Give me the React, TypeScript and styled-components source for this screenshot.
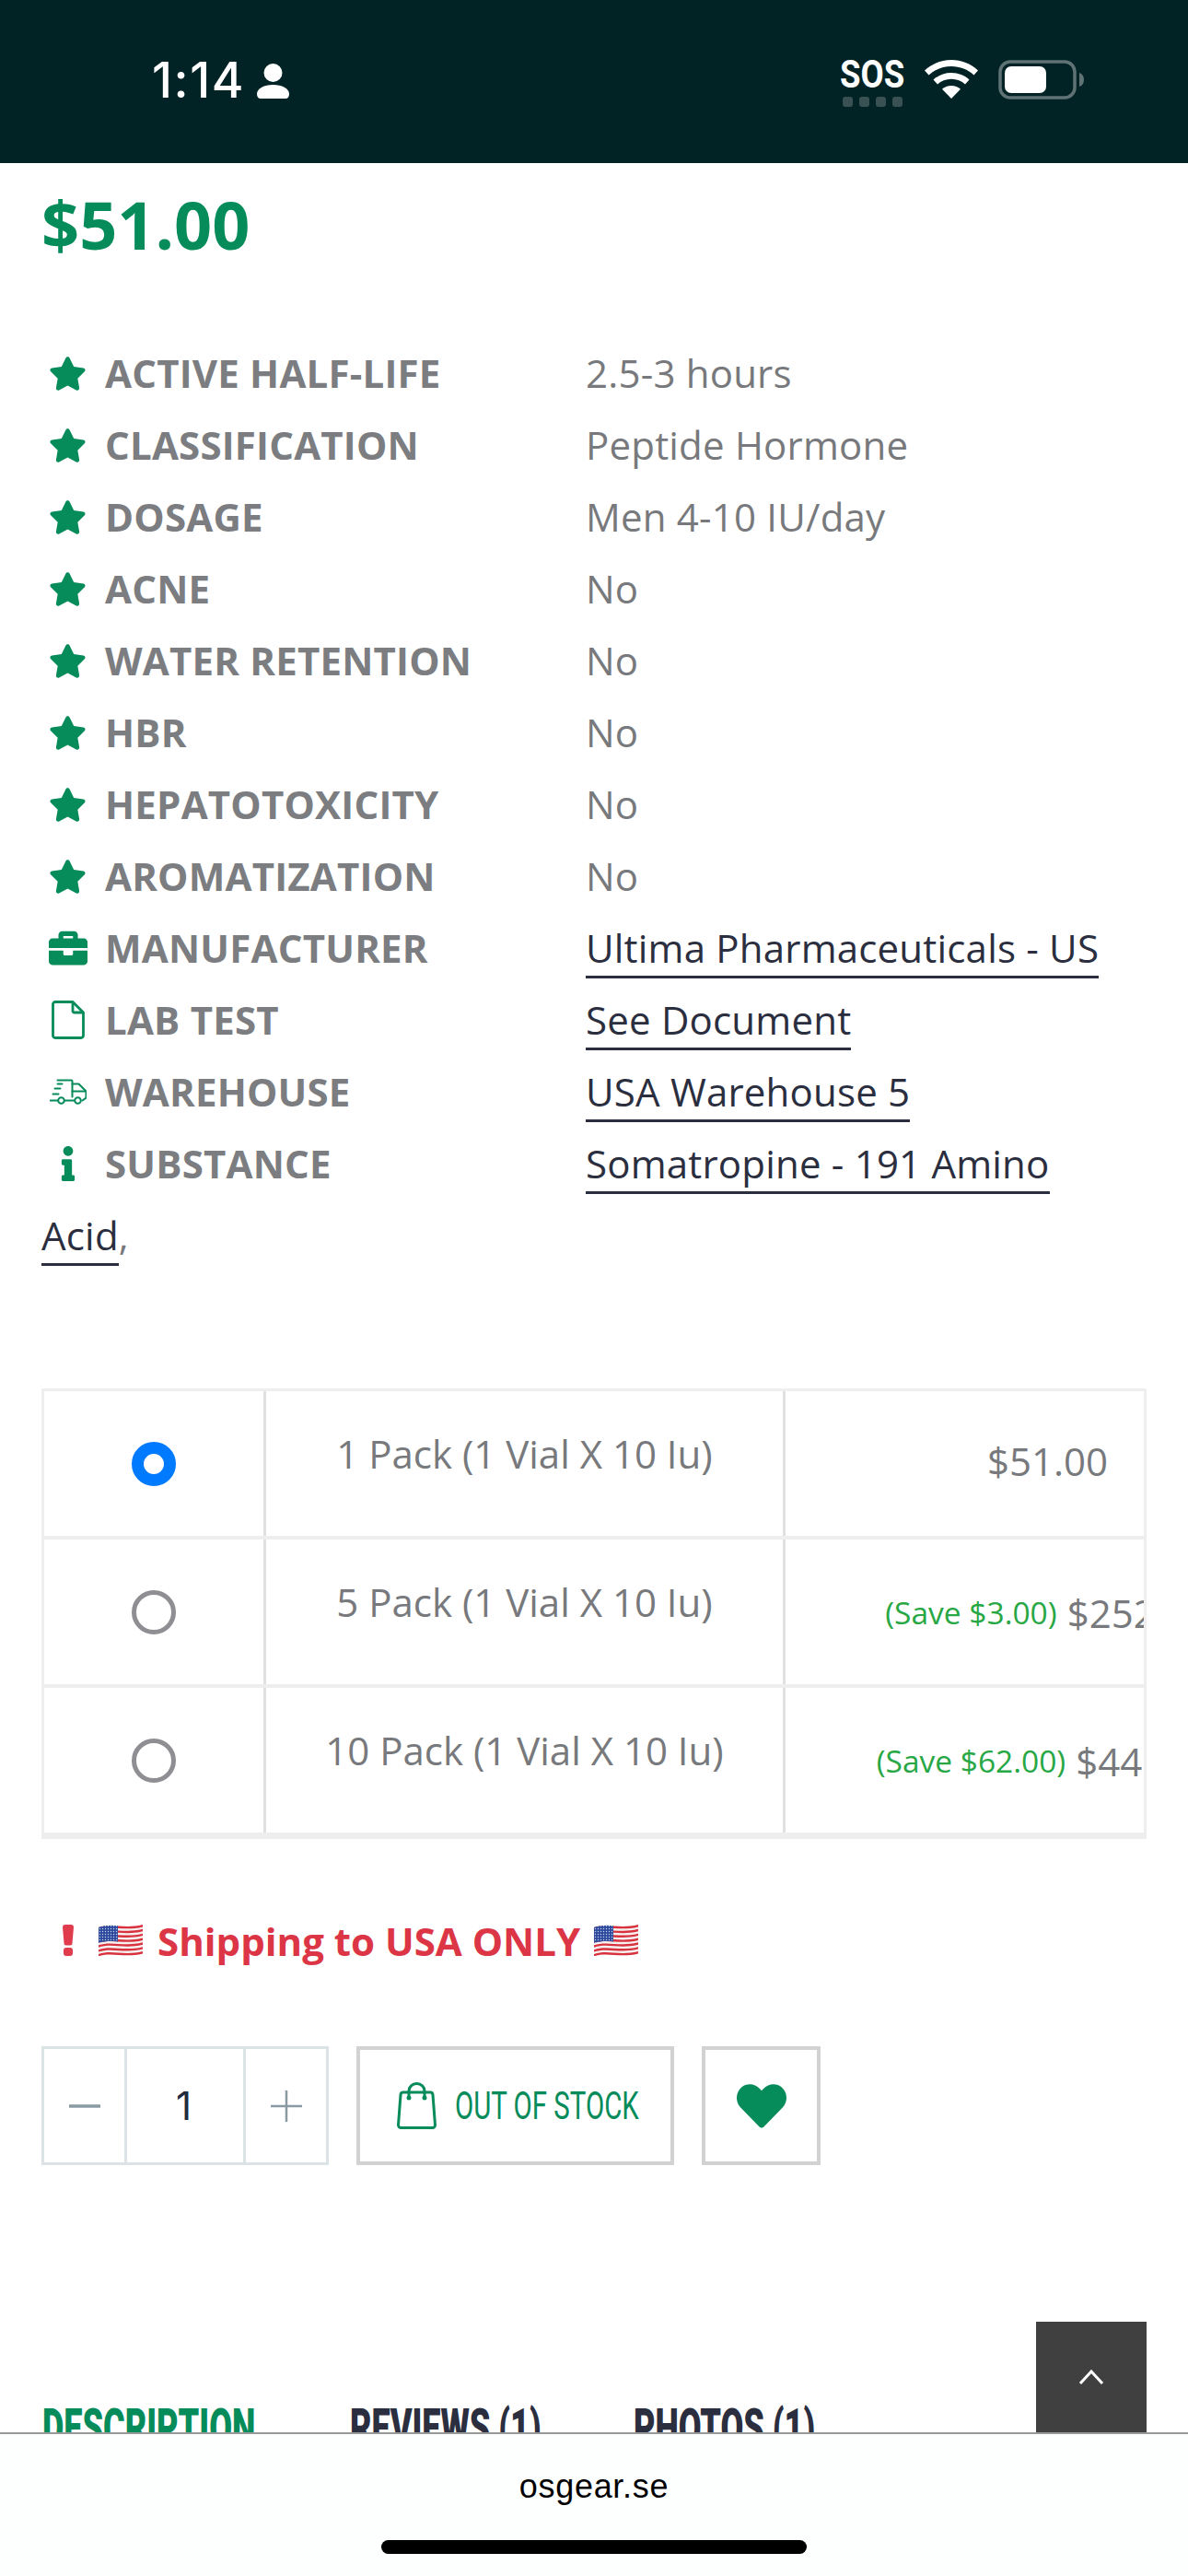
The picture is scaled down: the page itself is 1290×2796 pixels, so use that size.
import React from "react";
import styled, { createGlobalStyle } from "styled-components";
import { FaStar, FaBriefcase, FaInfo, FaHeart } from "react-icons/fa";

const Global = createGlobalStyle`
  html, body { margin: 0; padding: 0; background: #fff; }
  * { box-sizing: border-box; }
`;

const Page = styled.div`
  position: relative;
  width: 1290px;
  height: 2796px;
  overflow: hidden;
  background: #fff;
  font-family: "Open Sans", sans-serif;
`;

const StatusBar = styled.header`
  height: 177px;
  background: #012326;
  display: flex;
  justify-content: space-between;
  align-items: flex-start;
  padding: 65px 113px 0 165px;
  color: #fff;
`;
const StatusLeft = styled.div`
  display: flex;
  align-items: flex-start;
  gap: 13px;
`;
const Time = styled.span`
  font-family: Inter, sans-serif;
  font-weight: 500;
  font-size: 53px;
  line-height: 44px;
  letter-spacing: 1.6px;
`;
const PersonSlot = styled.span`
  display: block;
  margin-top: 4px;
`;
const StatusRight = styled.div`
  display: flex;
  align-items: flex-start;
  gap: 22px;
`;
const SosBlock = styled.div`
  display: flex;
  flex-direction: column;
  align-items: center;
  gap: 9px;
  width: 70px;
`;
const Sos = styled.span`
  display: block;
  width: 70px;
  font-family: Roboto, sans-serif;
  font-weight: 700;
  font-size: 42px;
  line-height: 31px;
  white-space: nowrap;
  transform: scaleX(0.87);
  transform-origin: left center;
`;
const SosDots = styled.div`
  display: flex;
  gap: 7px;
`;
const SosDot = styled.i`
  display: block;
  width: 11px;
  height: 11px;
  border-radius: 3px;
  background: #3a5154;
`;

const Main = styled.main`
  padding: 0 45px;
`;
const Price = styled.div`
  font-weight: 700;
  font-size: 72px;
  line-height: 90px;
  color: #068b5a;
  padding-top: 21px;
`;
const Specs = styled.ul`
  list-style: none;
  margin: 78px 20px 127px 0;
  padding: 0;
  font-size: 42px;
  line-height: 78px;
  letter-spacing: 0.2px;
`;
const SpecRow = styled.li`
  color: #77797c;
`;
const SpecLabel = styled.span`
  display: inline-block;
  width: 591px;
  font-weight: 700;
  color: #7b7d80;
  vertical-align: top;
`;
const SpecIcon = styled.span`
  display: inline-flex;
  justify-content: center;
  align-items: center;
  width: 57px;
  height: 78px;
  margin-right: 12px;
  vertical-align: top;
  color: #068b5a;
`;
const SpecLink = styled.a`
  color: #2a2e3e;
  text-decoration: none;
  border-bottom: 3px solid #2a2e3e;
  padding-bottom: 2px;
`;

const TableWrap = styled.div`
  width: 1200px;
  overflow: hidden;
  border: 3px solid #eee;
`;
const VariantRow = styled.div`
  display: grid;
  grid-template-columns: 241px 564px 572px;
  width: 1377px;
  height: 161px;
  border-bottom: 4px solid #eee;
`;
const Cell = styled.div`
  display: flex;
  align-items: center;
  justify-content: center;
  border-right: 3px solid #e0e0e0;
  color: #77797c;
  font-size: 42px;
  white-space: nowrap;
`;
const NameCell = styled(Cell)`
  align-items: flex-start;
  padding-top: 39px;
  line-height: 57px;
`;
const PriceCell = styled(Cell)<{ $solo: boolean }>`
  gap: 11px;
  padding-top: ${(p) => (p.$solo ? "0" : "1px")};
  padding-bottom: ${(p) => (p.$solo ? "7px" : "0")};
`;
const Save = styled.span`
  color: #28a745;
  font-size: 33.500px;
`;
const Radio = styled.input`
  appearance: none;
  width: 48px;
  height: 48px;
  margin: 0;
  border-radius: 50%;
  border: 5px solid #8e8e93;
  background: #fff;
  &:checked {
    border: 13px solid #007aff;
  }
`;

const Notice = styled.div`
  display: flex;
  align-items: center;
  height: 60px;
  margin: 80px 0 0 23px;
  color: #dc3545;
  font-weight: 700;
  font-size: 42px;
  white-space: nowrap;
`;
const NoticeText = styled.span`
  margin: 0 15px 0 16px;
`;
const BangSlot = styled.span`
  display: block;
  width: 39px;
`;

const Actions = styled.div`
  display: flex;
  gap: 30px;
  margin-top: 85px;
`;
const Qty = styled.div`
  display: grid;
  grid-template-columns: 90px 129px 1fr;
  width: 312px;
  height: 129px;
  border: 3px solid #dce3e6;
`;
const QtyCell = styled.div<{ $divider?: boolean }>`
  display: flex;
  align-items: center;
  justify-content: center;
  border-right: ${(p) => (p.$divider ? "3px solid #dce3e6" : "0")};
  color: #222a3e;
  font-family: Inter, sans-serif;
  font-size: 42px;
`;
const QtyValue = styled.span`
  padding-right: 3px;
`;
const ActionButton = styled.button`
  display: flex;
  align-items: center;
  justify-content: center;
  height: 129px;
  background: #fff;
  border: 4px solid #d2d2d2;
  color: #068b5a;
  padding: 0;
`;
const StockButton = styled(ActionButton)`
  width: 345px;
  justify-content: flex-start;
  gap: 20px;
  padding-left: 40px;
`;
const WishButton = styled(ActionButton)`
  width: 129px;
`;
const StockLabel = styled.span`
  display: block;
  width: 197px;
  font-family: Roboto, sans-serif;
  font-weight: 400;
  font-size: 42px;
  line-height: 1;
  text-align: left;
  white-space: nowrap;
  transform: scaleX(0.7);
  transform-origin: left center;
`;

const Tabs = styled.nav`
  display: flex;
  gap: 105px;
  margin: 257px 0 0 1px;
`;
const Tab = styled.span<{ $active?: boolean; $width: number }>`
  display: block;
  width: ${(p) => p.$width}px;
  font-family: Roboto, sans-serif;
  font-weight: 900;
  font-size: 55px;
  line-height: 56px;
  white-space: nowrap;
  color: ${(p) => (p.$active ? "#068b5a" : "#2a2e3e")};
  transform: scaleX(0.655);
  transform-origin: left center;
`;

const ToTop = styled.div`
  position: absolute;
  left: 1125px;
  top: 2520px;
  width: 120px;
  height: 120px;
  background: #404040;
  display: flex;
  align-items: center;
  justify-content: center;
`;
const BrowserBar = styled.footer`
  position: absolute;
  left: 0;
  right: 0;
  top: 2640px;
  height: 156px;
  background: #fdfefe;
  border-top: 2px solid #999;
  display: flex;
  flex-direction: column;
  align-items: center;
`;
const Domain = styled.div`
  margin-top: 36px;
  font-family: "Liberation Sans", sans-serif;
  font-size: 36px;
  line-height: 42px;
  letter-spacing: 0.7px;
  color: #000;
`;
const HomeBar = styled.div`
  margin-top: 37px;
  width: 462px;
  height: 15px;
  border-radius: 8px;
  background: #000;
`;

const Person = () => (
  <svg width="35" height="38" viewBox="0 0 35 38" fill="#fff" display="block">
    <circle cx="17.500" cy="10" r="10" />
    <path d="M0 33C0 27 8 23 17.500 23S35 27 35 33c0 3-1.500 5-4 5H4c-2.500 0-4-2-4-5z" />
  </svg>
);
const Wifi = () => (
  <svg width="58" height="42" viewBox="0 0 58 42" fill="#fff" display="block">
    <path d="M29 0c11 0 21 4 29 11.500l-4.500 5C47 10.500 38.500 7 29 7S11 10.500 4.500 16.500L0 11.500C8 4 18 0 29 0z" />
    <path d="M29 14c7.500 0 14.500 2.800 19.500 7.500L44 26.500C40 23 35 20.800 29 20.800S18 23 14 26.500l-4.500-5C14.500 16.800 21.500 14 29 14z" />
    <path d="M29 28c4 0 7.500 1.500 10 3.800L29 42 19 31.800C21.500 29.500 25 28 29 28z" />
  </svg>
);
const Battery = () => (
  <svg width="93" height="43" viewBox="0 0 93 43" display="block">
    <rect x="2" y="2" width="81" height="39" rx="11" fill="none" stroke="#5f7375" strokeWidth="3.500" />
    <rect x="7" y="7" width="45" height="29" rx="7" fill="#fff" />
    <path d="M88 14c3 1 5 3.500 5 7.500s-2 6.500-5 7.500z" fill="#5f7375" />
  </svg>
);
const FileIcon = () => (
  <svg width="36" height="42" viewBox="0 0 36 42" fill="none" stroke="#068b5a" strokeWidth="2.800" strokeLinejoin="round">
    <path d="M4 1.500H23L34.500 13V38a2.500 2.500 0 0 1-2.500 2.500H4A2.500 2.500 0 0 1 1.500 38V4A2.500 2.500 0 0 1 4 1.500z" />
    <path d="M23 1.500V11a2 2 0 0 0 2 2h9.500" />
  </svg>
);
const Truck = () => (
  <svg width="40" height="28" viewBox="-0.500 -0.500 40 28" fill="none" stroke="#068b5a" strokeWidth="2" strokeLinecap="round" strokeLinejoin="round">
    <path d="M8 1h15a1 1 0 0 1 1 1v17" />
    <path d="M24 5h7l8 8v7l-4 3" />
    <path d="M24 13h14" />
    <circle cx="12" cy="23" r="3.300" />
    <circle cx="30" cy="23" r="3.300" />
    <path d="M0 23h8M3 16h6M5 10h6M8 5h5M16 23h10" />
  </svg>
);
const Bag = () => (
  <svg width="43" height="51" viewBox="0 0 43 51" fill="none" stroke="#068b5a" strokeWidth="3" strokeLinecap="round" strokeLinejoin="round" style={{ flex: "none" }}>
    <path d="M7 11h29a3 3 0 0 1 3 2.800l2.500 32.700a3 3 0 0 1-3 3H4.500a3 3 0 0 1-3-3L4 13.800A3 3 0 0 1 7 11z" />
    <path d="M13 17V9.500a8.500 8 0 0 1 17 0V17" />
    <circle cx="13" cy="17" r="1" fill="#068b5a" />
    <circle cx="30" cy="17" r="1" fill="#068b5a" />
  </svg>
);
const Minus = () => (
  <svg width="34" height="34" viewBox="0 0 34 34"><path d="M0 17h34" stroke="#8a9aa3" strokeWidth="3.500" /></svg>
);
const Plus = () => (
  <svg width="34" height="34" viewBox="0 0 34 34"><path d="M0 17h34M17 0v34" stroke="#8a9aa3" strokeWidth="2.500" /></svg>
);
const Chevron = () => (
  <svg width="28" height="16" viewBox="0 0 28 16" fill="none"><path d="M2 15L14 2l12 13" stroke="#fff" strokeWidth="3" /></svg>
);
const Bang = () => (
  <svg width="12" height="34" viewBox="0 0 12 34" fill="#e03c4e" display="block">
    <path d="M0 3a3 3 0 0 1 3-3h6a3 3 0 0 1 3 3l-1.500 17a2.500 2.500 0 0 1-2.500 2.500H4A2.500 2.500 0 0 1 1.500 20z" />
    <rect x="1" y="25" width="10" height="9" rx="3" />
  </svg>
);
const Flag = () => {
  const stripe = (y: number, h: number) =>
    `M0 ${y + 3}C14 ${y - 2} 28 ${y + 5} 48 ${y}V${y + h}C28 ${y + h + 5} 14 ${y + h - 2} 0 ${y + h + 3}z`;
  return (
    <svg width="48" height="34" viewBox="0 0 48 34" style={{ flex: "none" }}>
      <defs>
        <pattern id="flag-stars" width="3" height="3" patternUnits="userSpaceOnUse">
          <rect width="3" height="3" fill="#2d4a9c" />
          <circle cx="1.500" cy="1.500" r="0.700" fill="#c9d3ee" />
        </pattern>
      </defs>
      <path d={stripe(0, 29)} fill="#f6f1f1" />
      {[0, 1, 2, 3, 4, 5, 6].map((i) => (
        <path key={i} d={stripe(i * 4.83, 2.4)} fill="#d8323f" />
      ))}
      <path d="M0 3C7 .5 14 .2 21 1.200V18.500C14 17.500 7 18 0 20z" fill="url(#flag-stars)" />
    </svg>
  );
};

const specs: { icon: React.ReactNode; label: string; value: string }[] = [
  { icon: <FaStar size={41} />, label: "ACTIVE HALF-LIFE", value: "2.5-3 hours" },
  { icon: <FaStar size={41} />, label: "CLASSIFICATION", value: "Peptide Hormone" },
  { icon: <FaStar size={41} />, label: "DOSAGE", value: "Men 4-10 IU/day" },
  { icon: <FaStar size={41} />, label: "ACNE", value: "No" },
  { icon: <FaStar size={41} />, label: "WATER RETENTION", value: "No" },
  { icon: <FaStar size={41} />, label: "HBR", value: "No" },
  { icon: <FaStar size={41} />, label: "HEPATOTOXICITY", value: "No" },
  { icon: <FaStar size={41} />, label: "AROMATIZATION", value: "No" },
];

const links: { icon: React.ReactNode; label: string; value: string; tail?: string }[] = [
  { icon: <FaBriefcase size={42} />, label: "MANUFACTURER", value: "Ultima Pharmaceuticals - US" },
  { icon: <FileIcon />, label: "LAB TEST", value: "See Document" },
  { icon: <Truck />, label: "WAREHOUSE", value: "USA Warehouse 5" },
  { icon: <FaInfo size={38} />, label: "SUBSTANCE", value: "Somatropine - 191 Amino Acid", tail: "," },
];

const variants = [
  { name: "1 Pack (1 Vial X 10 Iu)", price: "$51.00", checked: true },
  { name: "5 Pack (1 Vial X 10 Iu)", price: "$252.00", save: "(Save $3.00)" },
  { name: "10 Pack (1 Vial X 10 Iu)", price: "$448.00", save: "(Save $62.00)" },
];

export default function App() {
  return (
    <Page>
      <Global />
      <StatusBar>
        <StatusLeft>
          <Time>1:14</Time>
          <PersonSlot><Person /></PersonSlot>
        </StatusLeft>
        <StatusRight>
          <SosBlock>
            <Sos>SOS</Sos>
            <SosDots>
              <SosDot />
              <SosDot />
              <SosDot />
              <SosDot />
            </SosDots>
          </SosBlock>
          <Wifi />
          <Battery />
        </StatusRight>
      </StatusBar>
      <Main>
        <Price>$51.00</Price>
        <Specs>
          {specs.map((s) => (
            <SpecRow key={s.label}>
              <SpecLabel>
                <SpecIcon>{s.icon}</SpecIcon>
                {s.label}
              </SpecLabel>
              {s.value}
            </SpecRow>
          ))}
          {links.map((s) => (
            <SpecRow key={s.label}>
              <SpecLabel>
                <SpecIcon>{s.icon}</SpecIcon>
                {s.label}
              </SpecLabel>
              <SpecLink>{s.value}</SpecLink>
              {s.tail}
            </SpecRow>
          ))}
        </Specs>
        <TableWrap>
          {variants.map((v) => (
            <VariantRow key={v.name}>
              <Cell>
                <Radio type="radio" name="pack" defaultChecked={v.checked} />
              </Cell>
              <NameCell>{v.name}</NameCell>
              <PriceCell $solo={!v.save}>
                {v.save && <Save>{v.save}</Save>}
                {v.price}
              </PriceCell>
            </VariantRow>
          ))}
        </TableWrap>
        <Notice>
          <BangSlot><Bang /></BangSlot>
          <Flag />
          <NoticeText>Shipping to USA ONLY</NoticeText>
          <Flag />
        </Notice>
        <Actions>
          <Qty>
            <QtyCell $divider><Minus /></QtyCell>
            <QtyCell $divider><QtyValue>1</QtyValue></QtyCell>
            <QtyCell><Plus /></QtyCell>
          </Qty>
          <StockButton>
            <Bag />
            <StockLabel>OUT OF STOCK</StockLabel>
          </StockButton>
          <WishButton><FaHeart size={54} /></WishButton>
        </Actions>
        <Tabs>
          <Tab $active $width={229}>DESCRIPTION</Tab>
          <Tab $width={203}>REVIEWS (1)</Tab>
          <Tab $width={193}>PHOTOS (1)</Tab>
        </Tabs>
      </Main>
      <ToTop><Chevron /></ToTop>
      <BrowserBar>
        <Domain>osgear.se</Domain>
        <HomeBar />
      </BrowserBar>
    </Page>
  );
}
